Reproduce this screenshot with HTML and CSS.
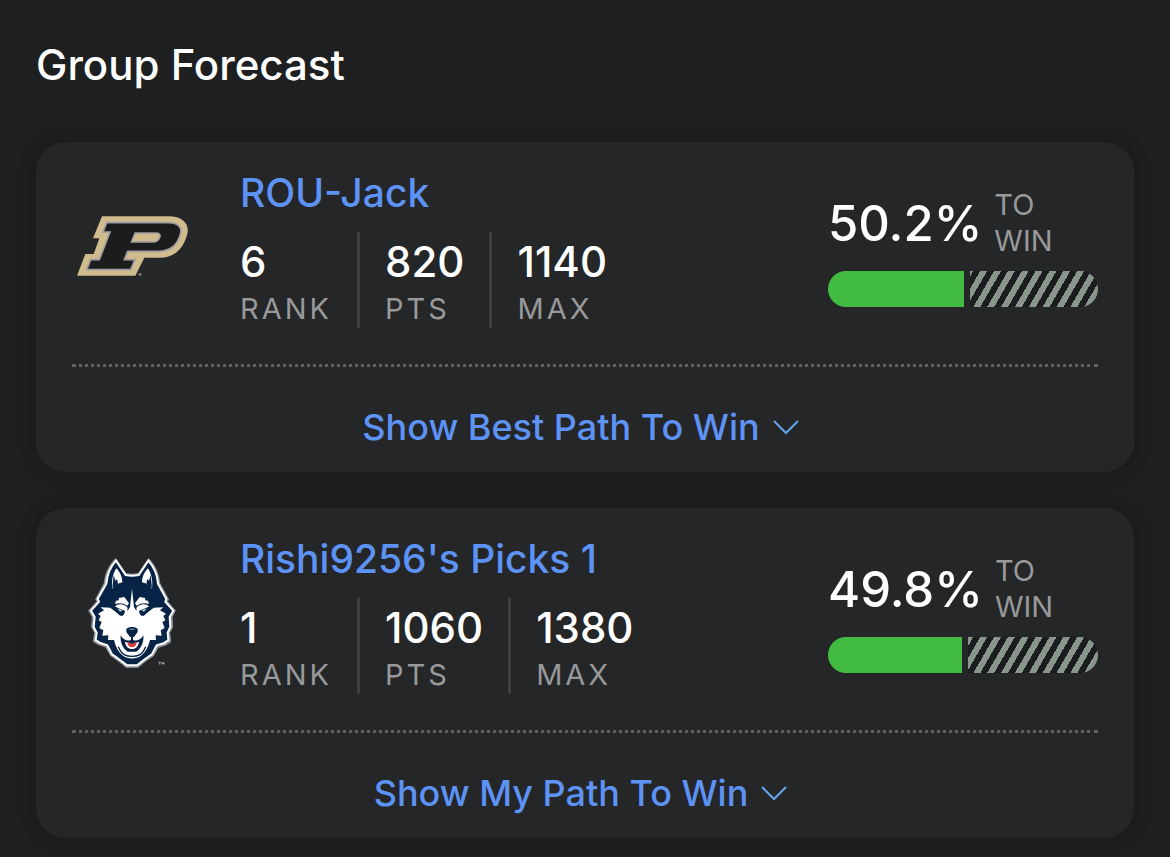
FILE: index.html
```html
<!DOCTYPE html>
<html lang="en">
<head>
<meta charset="utf-8">
<meta name="viewport" content="width=device-width, initial-scale=1">
<title>Group Forecast</title>
<link rel="stylesheet" href="styles.css">
</head>
<body>
<main class="page">
  <h1 class="page-title">Group Forecast</h1>

  <article class="card">
    <div class="entry">
      <svg class="logo" viewBox="18 -54 360 360" role="img" aria-label="Purdue">
        <path d="M108 34H308C350 34 371 57 364 87C352 132 325 158 283 158H235L208 212H33L58 147H83L100 100H81Z" fill="#d0bb8d"/>
        <path d="M122 53H308C337 53 349 68 343 88C334 121 312 139 278 139H185L175 164H207L194 194H62L74 164H100L132 81H111Z" fill="#1c1c1d" stroke="#a09da3" stroke-width="5"/>
        <path d="M207 84H272C282 84 285 91 281 98C277 107 271 111 263 111H196Z" fill="#d0bb8d" stroke="#a09da3" stroke-width="4"/>
        <circle cx="222" cy="208" r="5" fill="#77716a"/>
      </svg>
      <div class="info">
        <h2 class="entry-name"><a href="#rou-jack">ROU-Jack</a></h2>
        <dl class="stats">
          <div class="stat"><dt>Rank</dt><dd>6</dd></div>
          <div class="stat"><dt>Pts</dt><dd>820</dd></div>
          <div class="stat"><dt>Max</dt><dd>1140</dd></div>
        </dl>
      </div>
      <div class="chance">
        <p class="chance-text"><strong>50.2%</strong><span>TO<br>WIN</span></p>
        <div class="bar"><div class="bar-fill" style="width:50.2%"></div><div class="bar-rest"></div></div>
      </div>
    </div>
    <button class="toggle" type="button">Show Best Path To Win
      <svg class="chevron" viewBox="0 0 36 16" aria-hidden="true"><path d="M2 2L14 14L26 2"/></svg>
    </button>
  </article>

  <article class="card">
    <div class="entry">
      <svg class="logo" viewBox="-12 15 360 360" role="img" aria-label="UConn Huskies">
        <path d="M119 32L150 77Q168 80 187 77L218 32C237 51 249 78 251 105L278 155L274 160L298 188L288 207L290 237L281 254L284 282L269 291L247 298L232 324C213 335 196 350 186 358H150C140 349 121 334 104 323L89 297L66 289L52 281L56 254L47 237L49 207L38 188L63 160L59 154L85 105C87 77 100 50 119 32Z" fill="#8f969f" stroke="#8f969f" stroke-width="3"/>
        <path d="M120 38L149 81Q168 85 188 81L217 38C234 57 244 80 246 107L271 153L268 161L292 188L281 207L283 237L275 254L277 276L263 286L242 292L228 319C210 330 196 343 183 352H153C141 343 125 330 108 319L94 292L73 285L59 276L62 254L53 237L56 207L45 188L69 161L65 153L91 107C93 80 103 57 120 38Z" fill="#072447" stroke="#fff" stroke-width="6"/>
        <path d="M121 61C110 78 106 99 109 122C115 111 125 106 139 103C139 86 131 71 121 61ZM216 61C227 78 231 99 228 122C222 111 212 106 198 103C198 86 206 71 216 61Z" fill="#fff"/>
        <path d="M113 81L118 98L123 93L126 107L109 119ZM224 81L219 98L214 93L211 107L228 119Z" fill="#072447"/>
        <path d="M168 122L162 177L151 195L145 214C150 204 157 190 154 178C149 170 124 163 117 177L147 190C144 207 135 207 126 197L103 179L74 178L84 187L66 197L74 204L68 217L77 222L70 240L82 247L79 263L97 262L96 276L114 276C119 296 126 310 139 322C156 335 180 335 197 322C210 310 217 296 222 276L240 276L239 262L257 263L254 247L266 240L259 222L268 217L262 204L270 197L252 187L262 178L233 179L210 197C201 207 192 207 189 190L219 177C212 163 187 170 182 178C179 190 186 204 191 214L185 195L174 177Z" fill="#fff"/>
        <path d="M145 147L159 166L154 173Q141 163 117 167L120 158L129 157L128 150ZM191 147L177 166L182 173Q195 163 219 167L216 158L207 157L208 150Z" fill="#fff"/>
        <path d="M114 175L146 188L142 197L122 192ZM222 175L190 188L194 197L214 192Z" fill="#072447"/>
        <path d="M124 181L140 187L132 191ZM212 181L196 187L204 191Z" fill="#b7c8da"/>
        <path d="M151 243C159 235 177 235 185 243V252L174 267H162L151 252Z" fill="#072447"/>
        <path d="M158 245C164 240 173 240 178 245Z" fill="#81909f"/>
        <path d="M165 265H171V275C181 281 195 276 202 262C204 282 196 302 181 311H155C140 302 132 282 134 262C141 276 155 281 165 275Z" fill="#072447"/>
        <path d="M147 281C157 286 180 286 189 281C187 295 180 303 168 303C156 303 149 295 147 281Z" fill="#fff"/>
        <path d="M154 283Q168 288 182 283C181 293 176 298 168 298C160 298 155 293 154 283Z" fill="#db3d43"/>
        <path d="M163 280H173L168 290Z" fill="#072447"/>
        <path d="M127 296C138 323 153 325 168 325C184 325 198 323 209 296" fill="none" stroke="#072447" stroke-width="4"/>
        <path d="M247 343H255M251 343V350M258 350V343L261 348L264 343V350" fill="none" stroke="#c9c9ca" stroke-width="2"/>
      </svg>
      <div class="info">
        <h2 class="entry-name"><a href="#rishi9256">Rishi9256's Picks 1</a></h2>
        <dl class="stats">
          <div class="stat"><dt>Rank</dt><dd>1</dd></div>
          <div class="stat"><dt>Pts</dt><dd>1060</dd></div>
          <div class="stat"><dt>Max</dt><dd>1380</dd></div>
        </dl>
      </div>
      <div class="chance">
        <p class="chance-text"><strong>49.8%</strong><span>TO<br>WIN</span></p>
        <div class="bar"><div class="bar-fill" style="width:49.8%"></div><div class="bar-rest"></div></div>
      </div>
    </div>
    <button class="toggle" type="button">Show My Path To Win
      <svg class="chevron" viewBox="0 0 36 16" aria-hidden="true"><path d="M2 2L14 14L26 2"/></svg>
    </button>
  </article>
</main>
</body>
</html>
```

FILE: styles.css
```css
* {
  box-sizing: border-box;
}

body,
h1,
h2,
p,
dl,
dd {
  margin: 0;
}

body {
  background: #1e1f21;
  color: #fff;
  font-family: Inter, "Liberation Sans", sans-serif;
}

.page {
  display: flex;
  flex-direction: column;
  gap: 36px;
  padding: 36px 36px 19px;
}

.page-title {
  margin-bottom: 12px;
  font-size: 42px;
  font-weight: 500;
  line-height: 58px;
}

.card {
  padding: 24px 36px;
  border-radius: 30px;
  background: #252628;
  box-shadow: 0 0 18px rgba(0, 0, 0, 0.22);
}

.entry {
  display: flex;
  align-items: center;
  padding-bottom: 36px;
  border-bottom: 3px dotted #606163;
}

.logo {
  flex: none;
  width: 120px;
  height: 120px;
  margin-right: 48px;
}

.info {
  flex: 1;
}

.entry-name {
  margin-bottom: 12px;
  font-size: 39px;
  font-weight: 500;
  line-height: 54px;
}

.entry-name a {
  color: #5d93f5;
  text-decoration: none;
}

.stats {
  display: flex;
}

.stat {
  display: flex;
  flex-direction: column-reverse;
  padding: 0 25px 2px;
  border-left: 3px solid #3e3f41;
}

.stat:first-child {
  padding-left: 0;
  border-left: 0;
}

.stat dd {
  font-size: 42px;
  font-weight: 500;
  line-height: 60px;
}

.stat dt {
  color: #98999b;
  font-size: 29px;
  letter-spacing: 3px;
  line-height: 34px;
  text-transform: uppercase;
}

.chance {
  flex: none;
  width: 270px;
}

.chance-text {
  display: flex;
  align-items: center;
  gap: 12px;
  margin-bottom: 12px;
}

.chance-text strong {
  font-size: 49px;
  font-weight: 500;
}

.chance-text span {
  color: #98999b;
  font-size: 29px;
  line-height: 36px;
}

.bar {
  display: flex;
  gap: 6px;
  height: 36px;
  border-radius: 18px;
  overflow: hidden;
}

.bar-fill {
  flex: none;
  background: #42bb42;
}

.bar-rest {
  flex: 1;
  background: repeating-linear-gradient(300deg, #1c1d1e 0 6px, #89968b 6px 12px);
}

.toggle {
  display: flex;
  align-items: center;
  justify-content: center;
  gap: 12px;
  width: 100%;
  padding: 39px 0 0;
  border: 0;
  background: none;
  color: #5d93f5;
  font: 500 36px/42px Inter, "Liberation Sans", sans-serif;
  cursor: pointer;
}

.chevron {
  width: 36px;
  height: 16px;
  fill: none;
  stroke: #62a4ea;
  stroke-width: 2;
}
```
